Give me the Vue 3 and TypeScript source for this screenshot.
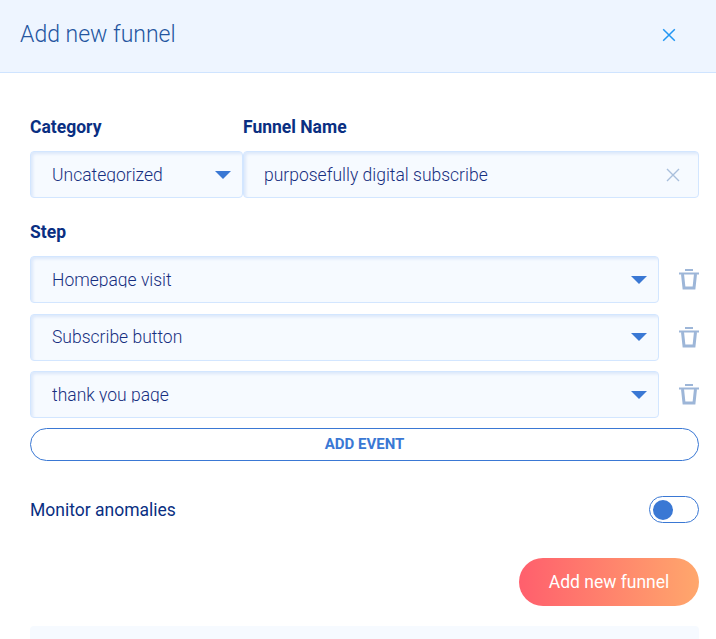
<script setup lang="ts">
const steps: string[] = ['Homepage visit', 'Subscribe button', 'thank you page']
</script>

<template>
  <div class="modal">
    <header class="head">
      <h1 class="title">Add new funnel</h1>
      <svg class="close" width="14" height="14" viewBox="0 0 14 14" aria-hidden="true">
        <path d="M1.2 1.2 12.8 12.8M12.8 1.2 1.2 12.8" stroke="#2196f3" stroke-width="1.5" fill="none" />
      </svg>
    </header>
    <main class="body">
      <div class="top-row">
        <div class="col-cat">
          <div class="label">Category</div>
          <div class="field select">
            <span class="value">Uncategorized</span>
            <i class="caret"></i>
          </div>
        </div>
        <div class="col-name">
          <div class="label">Funnel Name</div>
          <div class="field name">
            <span class="value">purposefully digital subscribe</span>
            <svg width="14" height="14" viewBox="0 0 14 14" aria-hidden="true">
              <path d="M1 1 13 13M13 1 1 13" stroke="#a9bfdc" stroke-width="1.4" fill="none" />
            </svg>
          </div>
        </div>
      </div>
      <div class="label step-label">Step</div>
      <div class="steps">
        <div v-for="s in steps" :key="s" class="step-row">
          <div class="field select step">
            <span class="value">{{ s }}</span>
            <i class="caret"></i>
          </div>
          <svg class="trash" width="20" height="21" viewBox="0 0 20 21" aria-hidden="true">
            <path d="M6 1H14M0 4.500H20" stroke="#9db6d8" stroke-width="2.200" fill="none" />
            <path d="M3.500 5 5 19H15L16.500 5" stroke="#9db6d8" stroke-width="3" fill="none" />
          </svg>
        </div>
      </div>
      <button class="add-event" type="button">ADD EVENT</button>
      <div class="monitor">
        <span>Monitor anomalies</span>
        <span class="toggle"><i class="knob"></i></span>
      </div>
      <div class="actions">
        <button class="submit" type="button">Add new funnel</button>
      </div>
      <div class="panel"></div>
    </main>
  </div>
</template>

<style>
html, body { margin: 0; background: #fff; overflow: hidden; }
</style>

<style scoped>
.modal {
  width: 716px;
  height: 639px;
  overflow: hidden;
  font-family: Roboto, "Liberation Sans", sans-serif;
  color: #0a2f82;
}
.head {
  box-sizing: border-box;
  height: 73px;
  display: flex;
  align-items: center;
  justify-content: space-between;
  padding: 0 40px 3px 20px;
  background: #eef5ff;
  border-bottom: 1px solid #cfe4ff;
}
.title {
  margin: 0;
  font-size: 23px;
  font-weight: 300;
  color: #24559f;
}
.body { padding: 44px 17px 0 30px; }
.top-row { display: flex; }
.col-cat { width: 213px; }
.col-name { flex: 1; }
.label {
  font-size: 17.500px;
  font-weight: 700;
  line-height: 20px;
  color: #0a2f82;
  margin-bottom: 14px;
}
.field {
  box-sizing: border-box;
  height: 47px;
  display: flex;
  align-items: center;
  background: #f6faff;
  border: 1px solid #d3e6ff;
  border-radius: 4px;
  box-shadow: inset 2px 2px 3px rgba(120, 165, 235, 0.2);
  font-size: 17.500px;
  font-weight: 300;
}
.value {
  flex: 1;
  line-height: 18px;
  height: 18px;
  overflow: hidden;
  clip-path: inset(0 0 1px 0);
  white-space: nowrap;
  color: #162f80;
}
.name .value { height: 22px; line-height: 22px; clip-path: none; }
.select { padding: 0 11px 0 21px; }
.name { padding: 0 18px 0 20px; }
.caret {
  width: 0;
  height: 0;
  border-left: 8px solid transparent;
  border-right: 8px solid transparent;
  border-top: 8px solid #3a78d4;
}
.step-label { margin-top: 24px; margin-bottom: 14px; }
.steps { display: flex; flex-direction: column; gap: 10.500px; }
.step-row { display: flex; align-items: center; gap: 20px; }
.step { width: 629px; }
.trash { flex: none; }
.add-event {
  display: block;
  box-sizing: border-box;
  width: 100%;
  height: 33px;
  margin-top: 10px;
  background: #fff;
  border: 1px solid #3a78d4;
  border-radius: 17px;
  color: #3a78d4;
  font: 700 15px Roboto, sans-serif;
  padding: 0 0 1px;
}
.monitor {
  display: flex;
  align-items: center;
  justify-content: space-between;
  height: 27px;
  margin-top: 35px;
  font-size: 17.500px;
  font-weight: 400;
}
.toggle {
  box-sizing: border-box;
  width: 50px;
  height: 27px;
  display: flex;
  align-items: center;
  padding-left: 3px;
  border: 1px solid #3a78d4;
  border-radius: 14px;
}
.knob {
  width: 20px;
  height: 20px;
  border-radius: 50%;
  background: #3a78d4;
}
.actions {
  display: flex;
  justify-content: flex-end;
  margin-top: 35px;
}
.submit {
  width: 180px;
  height: 48px;
  border: 0;
  border-radius: 24px;
  background: linear-gradient(90deg, #ff5f6d, #ffa76c);
  color: #fff;
  font: 400 17.500px Roboto, sans-serif;
  padding: 0;
}
.panel {
  height: 40px;
  margin-top: 20px;
  background: #f6faff;
  border-radius: 4px;
}
</style>
